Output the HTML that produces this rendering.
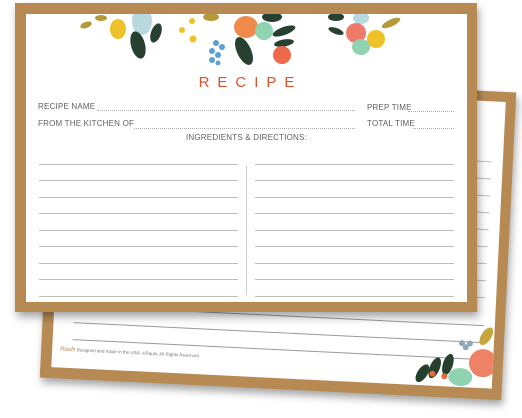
<!DOCTYPE html>
<html><head><meta charset="utf-8"><style>
html,body{margin:0;padding:0;background:#fff;width:522px;height:418px;overflow:hidden;position:relative;font-family:"Liberation Sans",sans-serif}
.card{position:absolute;background:#b78a54;box-shadow:2px 5px 8px rgba(0,0,0,.35)}
.inner{position:absolute;background:#fff;overflow:hidden}
.lbl{position:absolute;font-size:8px;color:#5f5f5f;letter-spacing:.2px;white-space:nowrap}
.dot{position:absolute;border-bottom:1px dotted #aaa;height:0}
.ln{position:absolute;height:1px;background:#bdbdbd}
</style></head><body>
<div class="card" style="left:47px;top:81px;width:462px;height:308px;transform:rotate(2.8deg)">
 <div class="inner" style="left:11px;top:10px;right:10px;bottom:11px">
  <div class="ln" style="left:20px;top:258px;width:410px;background:#999"></div>
  <div class="ln" style="left:20px;top:241px;width:410px;background:#999"></div>
  <div class="ln" style="left:20px;top:224px;width:410px;background:#999"></div>
  <div class="ln" style="left:400px;top:60px;width:30px"></div>
  <div class="ln" style="left:400px;top:77px;width:30px"></div>
  <div class="ln" style="left:400px;top:94px;width:30px"></div>
  <div class="ln" style="left:400px;top:111px;width:30px"></div>
  <div class="ln" style="left:400px;top:128px;width:30px"></div>
  <div class="ln" style="left:400px;top:145px;width:30px"></div>
  <div class="ln" style="left:400px;top:162px;width:30px"></div>
  <div class="ln" style="left:400px;top:179px;width:30px"></div>
  <div class="ln" style="left:400px;top:196px;width:30px"></div>
  <div style="position:absolute;left:8px;top:266px;font-size:4.5px;color:#777;white-space:nowrap"><span style="color:#b98a52;font-style:italic;font-size:6px">Rauls</span> Designed and made in the USA. ©Rauls. All Rights Reserved.</div>
  <svg style="position:absolute;right:0;bottom:0" width="90" height="70" viewBox="0 0 90 70">
   <ellipse cx="20" cy="58" rx="5" ry="10" fill="#26402e" transform="rotate(30 20 58)"/>
   <ellipse cx="32" cy="52" rx="5" ry="11" fill="#26402e" transform="rotate(20 32 52)"/>
   <ellipse cx="45" cy="48" rx="5" ry="11" fill="#26402e" transform="rotate(15 45 48)"/>
   <circle cx="30" cy="58" r="3" fill="#e86a3a"/><circle cx="42" cy="60" r="3" fill="#e86a3a"/>
   <ellipse cx="58" cy="60" rx="12" ry="9" fill="#8fd3b0"/>
   <circle cx="80" cy="45" r="14" fill="#ee8266"/>
   <ellipse cx="82" cy="18" rx="5" ry="10" fill="#c9a540" transform="rotate(30 82 18)"/>
   <circle cx="62" cy="30" r="3" fill="#8fa8b8"/><circle cx="66" cy="26" r="3" fill="#8fa8b8"/><circle cx="58" cy="26" r="3" fill="#8fa8b8"/>
  </svg>
 </div>
</div>
<div class="card" style="left:15px;top:3px;width:462px;height:309px">
 <div class="inner" style="left:11px;top:11px;width:441px;height:288px">
  <svg style="position:absolute;left:0;top:-11px" width="441" height="70" viewBox="0 0 441 70">
   <g>
    <ellipse cx="60" cy="22" rx="6" ry="3" fill="#b59a3a" transform="rotate(-20 60 22)"/>
    <ellipse cx="75" cy="15" rx="6" ry="3" fill="#b59a3a"/>
    <ellipse cx="92" cy="26" rx="8" ry="10" fill="#f0c22a"/>
    <ellipse cx="116" cy="18" rx="10" ry="14" fill="#b8d8e0"/>
    <ellipse cx="112" cy="42" rx="7" ry="14" fill="#27402f" transform="rotate(-15 112 42)"/>
    <ellipse cx="130" cy="30" rx="5" ry="10" fill="#27402f" transform="rotate(20 130 30)"/>
    <circle cx="166" cy="18" r="3" fill="#f0c22a"/><circle cx="156" cy="27" r="3" fill="#f0c22a"/><circle cx="167" cy="36" r="3.5" fill="#f0c22a"/>
    <ellipse cx="185" cy="14" rx="8" ry="4" fill="#b59a3a"/>
    <g fill="#5aa0d8"><circle cx="190" cy="40" r="3"/><circle cx="196" cy="44" r="3"/><circle cx="186" cy="48" r="3"/><circle cx="192" cy="52" r="3"/><circle cx="186" cy="57" r="3"/><circle cx="192" cy="60" r="2.5"/></g>
    <ellipse cx="220" cy="24" rx="12" ry="11" fill="#ef8a4a"/>
    <ellipse cx="238" cy="28" rx="9" ry="9" fill="#8fd3b0"/>
    <ellipse cx="218" cy="48" rx="7" ry="15" fill="#27402f" transform="rotate(-25 218 48)"/>
    <ellipse cx="246" cy="14" rx="10" ry="5" fill="#27402f"/>
    <ellipse cx="258" cy="28" rx="12" ry="4" fill="#27402f" transform="rotate(-20 258 28)"/>
    <ellipse cx="258" cy="40" rx="10" ry="3.5" fill="#27402f" transform="rotate(-10 258 40)"/>
    <circle cx="256" cy="52" r="9" fill="#ee6a4a"/>
    <ellipse cx="310" cy="14" rx="8" ry="4" fill="#27402f"/>
    <ellipse cx="335" cy="15" rx="8" ry="6" fill="#b8d8e0"/>
    <ellipse cx="330" cy="30" rx="10" ry="10" fill="#ee7a6a"/>
    <ellipse cx="350" cy="36" rx="9" ry="9" fill="#f0c22a"/>
    <ellipse cx="335" cy="44" rx="9" ry="8" fill="#8fd3b0"/>
    <ellipse cx="365" cy="20" rx="10" ry="3.5" fill="#b59a3a" transform="rotate(-25 365 20)"/>
    <ellipse cx="310" cy="28" rx="8" ry="3" fill="#27402f" transform="rotate(20 310 28)"/>
   </g>
  </svg>
  <div style="position:absolute;left:0;width:441px;top:60px;text-align:center;color:#d9532c;font-size:15px;letter-spacing:8px;padding-left:8px;box-sizing:border-box">RECIPE</div>
  <div class="lbl" style="left:12px;top:88px">RECIPE NAME</div>
  <div class="dot" style="left:71px;width:258px;top:96px"></div>
  <div class="lbl" style="left:341px;top:89px">PREP TIME</div>
  <div class="dot" style="left:382px;width:46px;top:97px"></div>
  <div class="lbl" style="left:12px;top:105px">FROM THE KITCHEN OF</div>
  <div class="dot" style="left:108px;width:221px;top:114px"></div>
  <div class="lbl" style="left:341px;top:105px">TOTAL TIME</div>
  <div class="dot" style="left:387px;width:41px;top:114px"></div>
  <div class="lbl" style="left:0;width:441px;text-align:center;top:119px">INGREDIENTS &amp; DIRECTIONS:</div>
  <div style="position:absolute;left:220px;top:152px;width:1px;height:129px;background:#ccc"></div>
  <div class="ln" style="left:13px;width:199px;top:150px"></div><div class="ln" style="left:229px;width:199px;top:150px"></div>
  <div class="ln" style="left:13px;width:199px;top:166px"></div><div class="ln" style="left:229px;width:199px;top:166px"></div>
  <div class="ln" style="left:13px;width:199px;top:183px"></div><div class="ln" style="left:229px;width:199px;top:183px"></div>
  <div class="ln" style="left:13px;width:199px;top:199px"></div><div class="ln" style="left:229px;width:199px;top:199px"></div>
  <div class="ln" style="left:13px;width:199px;top:216px"></div><div class="ln" style="left:229px;width:199px;top:216px"></div>
  <div class="ln" style="left:13px;width:199px;top:232px"></div><div class="ln" style="left:229px;width:199px;top:232px"></div>
  <div class="ln" style="left:13px;width:199px;top:249px"></div><div class="ln" style="left:229px;width:199px;top:249px"></div>
  <div class="ln" style="left:13px;width:199px;top:265px"></div><div class="ln" style="left:229px;width:199px;top:265px"></div>
  <div class="ln" style="left:13px;width:199px;top:282px"></div><div class="ln" style="left:229px;width:199px;top:282px"></div>
 </div>
</div>
</body></html>
